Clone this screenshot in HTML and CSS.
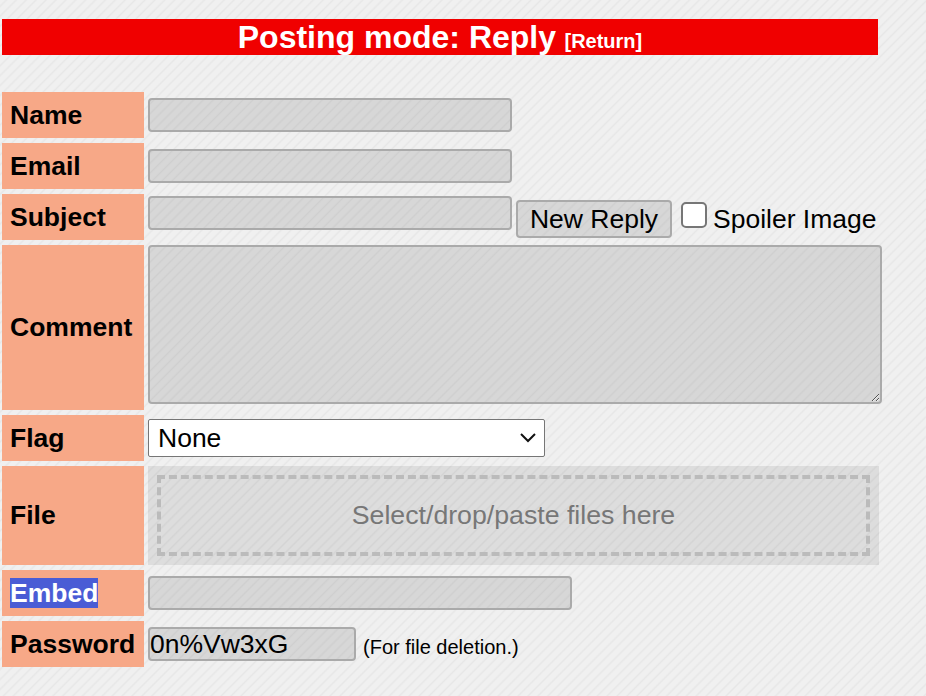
FILE: index.html
```html
<!DOCTYPE html>
<html lang="en">
<head>
<meta charset="utf-8">
<title>Posting mode: Reply</title>
<link rel="stylesheet" href="styles.css">
</head>
<body>
<div class="page">
  <div class="banner">
    <span class="banner-title">Posting mode: Reply</span>
    <a class="banner-link" href="#">[Return]</a>
  </div>
  <form class="post-form">
    <div class="label">Name</div>
    <div class="cell"><input class="field field-name" type="text"></div>

    <div class="label">Email</div>
    <div class="cell"><input class="field field-name" type="text"></div>

    <div class="label">Subject</div>
    <div class="cell cell-subject">
      <input class="field field-name" type="text">
      <button class="btn" type="button">New Reply</button>
      <span class="check"></span>
      <span class="check-label">Spoiler Image</span>
    </div>

    <div class="label">Comment</div>
    <div class="cell cell-top"><textarea class="field field-comment"></textarea></div>

    <div class="label">Flag</div>
    <div class="cell">
      <div class="select">
        <span>None</span>
        <svg class="chev" width="18" height="12" viewBox="0 0 18 12"><path d="M2 2 L9 9 L16 2" fill="none" stroke="#111" stroke-width="2"/></svg>
      </div>
    </div>

    <div class="label">File</div>
    <div class="cell cell-file">
      <div class="dropzone">Select/drop/paste files here</div>
    </div>

    <div class="label"><span class="selected">Embed</span></div>
    <div class="cell"><input class="field field-embed" type="text"></div>

    <div class="label">Password</div>
    <div class="cell">
      <input class="field field-pass" type="text" value="0n%Vw3xG">
      <span class="note">(For file deletion.)</span>
    </div>
  </form>
</div>
</body>
</html>
```
FILE: styles.css
```css
html, body {
  margin: 0;
  padding: 0;
}
body {
  width: 926px;
  height: 696px;
  overflow: hidden;
  font-family: "Liberation Sans", Arial, sans-serif;
  color: #000;
  background-color: #efefef;
  background-image: repeating-linear-gradient(135deg, #f0f0f0 0px, #f0f0f0 3px, #e7e7e7 4.5px, #f0f0f0 6px, #f0f0f0 7px);
}
.page {
  padding: 19px 0 0 2px;
}
.banner {
  width: 876px;
  height: 36px;
  background: #f00000;
  color: #fff;
  font-weight: bold;
  text-align: center;
  line-height: 36px;
}
.banner-title {
  font-size: 32px;
}
.banner-link {
  color: #fff;
  text-decoration: none;
  font-size: 20px;
  margin-left: 4px;
}
.post-form {
  margin-top: 37px;
  display: grid;
  grid-template-columns: 142px 760px;
  grid-template-rows: 46px 46px 46px 165px 46px 99px 46px 46px;
  column-gap: 4px;
  row-gap: 5px;
}
.label {
  background: #f7a887;
  font-weight: bold;
  font-size: 26.5px;
  padding-left: 8px;
  display: flex;
  align-items: center;
}
.selected {
  background: #4a5cd5;
  color: #fff;
  line-height: 30px;
}
.cell {
  display: flex;
  align-items: center;
}
.cell-top {
  align-items: flex-start;
}
.field {
  box-sizing: border-box;
  border: 2px solid #aaaaaa;
  border-radius: 4px;
  background: rgba(0, 0, 0, 0.1);
  font-family: "Liberation Sans", Arial, sans-serif;
  font-size: 26.5px;
  color: #000;
  padding: 0;
  margin: 0;
  outline: none;
}
.field-name {
  width: 364px;
  height: 34px;
}
.cell-subject {
  align-items: flex-start;
}
.cell-subject .field-name {
  margin-top: 2px;
}
.btn {
  box-sizing: border-box;
  margin: 6px 0 0 4px;
  width: 156px;
  height: 38px;
  border: 2px solid #aaaaaa;
  border-radius: 4px;
  background: rgba(0, 0, 0, 0.1);
  font-family: "Liberation Sans", Arial, sans-serif;
  font-size: 26.5px;
  color: #000;
  padding: 0;
}
.check {
  box-sizing: border-box;
  margin: 8px 0 0 9px;
  width: 26px;
  height: 26px;
  border: 2px solid #767676;
  border-radius: 5px;
  background: #fff;
}
.check-label {
  font-size: 26.5px;
  margin: 10px 0 0 6px;
}
.field-comment {
  width: 734px;
  height: 159px;
  resize: both;
}
.select {
  box-sizing: border-box;
  width: 397px;
  height: 38px;
  border: 1px solid #767676;
  border-radius: 2px;
  background: #fff;
  font-size: 26.5px;
  padding: 0 7px 0 9px;
  display: flex;
  align-items: center;
  justify-content: space-between;
}
.chev {
  display: block;
}
.cell-file {
  align-items: stretch;
}
.dropzone {
  box-sizing: border-box;
  width: 731px;
  background: rgba(0, 0, 0, 0.08);
  color: #777;
  font-size: 26.7px;
  display: flex;
  align-items: center;
  justify-content: center;
  outline: 4px dashed #bbbbbb;
  outline-offset: -13px;
}
.field-embed {
  width: 424px;
  height: 34px;
}
.field-pass {
  width: 208px;
  height: 34px;
}
.note {
  font-size: 20px;
  margin-left: 7px;
  margin-top: 6px;
}
```
